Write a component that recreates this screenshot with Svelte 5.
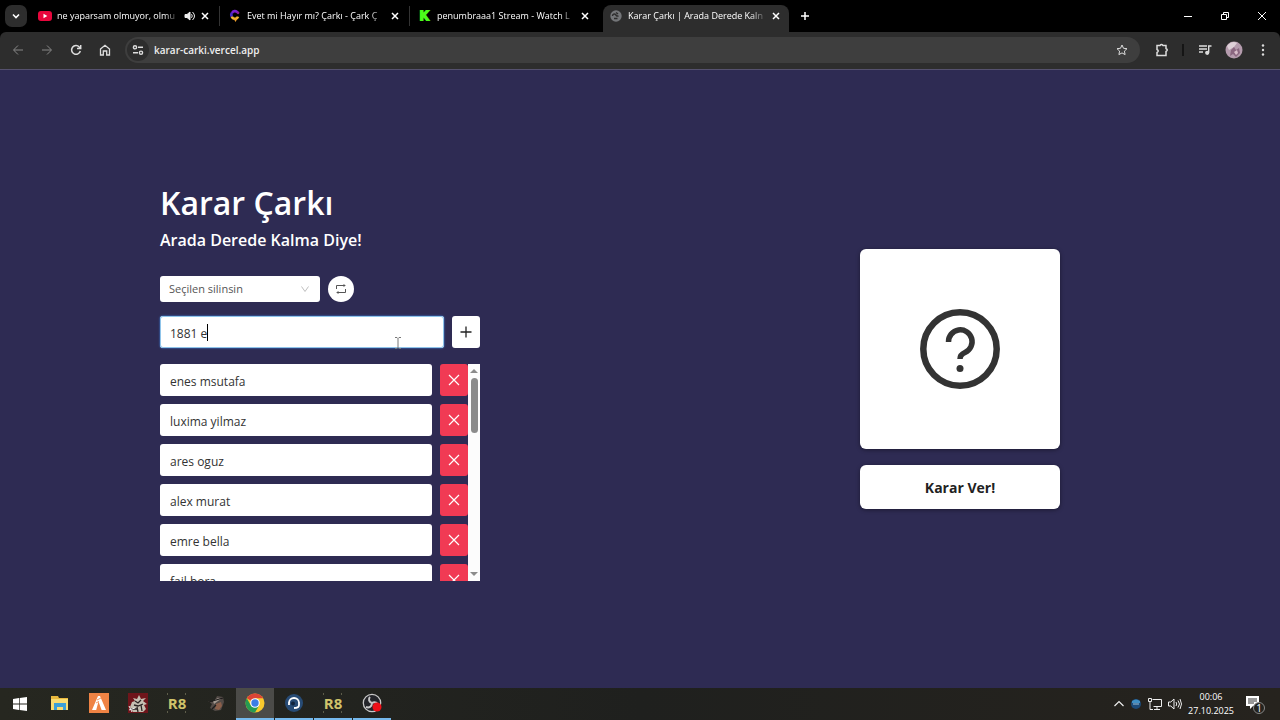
<script lang="ts">
	type Tab = { title: string; icon: string; audio?: boolean; active?: boolean };

	const tabs: Tab[] = [
		{ title: 'ne yaparsam olmuyor, olmu', icon: 'youtube', audio: true },
		{ title: 'Evet mi Hayır mı? Çarkı - Çark Ç', icon: 'wheel' },
		{ title: 'penumbraaa1 Stream - Watch L', icon: 'kick' },
		{ title: 'Karar Çarkı | Arada Derede Kaln', icon: 'globe', active: true }
	];

	const apps = [
		{ name: 'Explorer', icon: 'explorer' },
		{ name: 'FiveM', icon: 'fivem' },
		{ name: 'Samurai', icon: 'samurai' },
		{ name: 'R8', icon: 'r8' },
		{ name: 'Game', icon: 'game' },
		{ name: 'Chrome', icon: 'chrome', running: true, active: true },
		{ name: 'TeamSpeak', icon: 'teamspeak', running: true },
		{ name: 'R8 client', icon: 'r8', running: true },
		{ name: 'OBS', icon: 'obs', running: true }
	];

	let options = $state(['enes msutafa', 'luxima yilmaz', 'ares oguz', 'alex murat', 'emre bella', 'fail bora']);
	let draft = $state('1881 e');
	let mode = $state('remove');
	let url = $state('karar-carki.vercel.app');

	function addOption(event: SubmitEvent) {
		event.preventDefault();
		if (!draft.trim()) return;
		options.push(draft.trim());
		draft = '';
	}

	function removeOption(index: number) {
		options.splice(index, 1);
	}
</script>

{#snippet cross()}
	<svg width="8" height="8" viewBox="0 0 8 8" fill="none" stroke="currentColor" stroke-width="1.5">
		<path d="M1 1l6 6M7 1L1 7" />
	</svg>
{/snippet}

{#snippet favicon(icon: string)}
	<svg class="favicon" width="14" height="14" viewBox="0 0 14 14">
		{#if icon === 'youtube'}
			<rect x="0" y="2" width="14" height="10" rx="3" fill="#e8063c" />
			<path d="M5.5 4.8v4.4L9.3 7z" fill="#fff" />
		{:else if icon === 'wheel'}
			<g fill="none" stroke-width="2.6">
				<path d="M9.5 3.3A3.3 3.3 0 0 0 4 4" stroke="#7a1fd0" />
				<path d="M4 3.8a3.3 3.3 0 0 0 0 4" stroke="#4a25c8" />
				<path d="M3.8 7.6A3.3 3.3 0 0 0 10 7.6" stroke="#f5b832" />
			</g>
			<path d="M5.5 9.5h4L7.5 13z" fill="#f0a02a" />
			<circle cx="10" cy="3.8" r="1.4" fill="#8a1c9a" />
		{:else if icon === 'kick'}
			<text x="2" y="11" font-family="Liberation Sans, sans-serif" font-size="12" font-weight="700" fill="#4cfb1b" stroke="#4cfb1b" stroke-width="1.8">K</text>
		{:else}
			<circle cx="7" cy="7" r="5.7" fill="#747679" />
			<path d="M3.5 7c0-2 2-2.500 3-1.500s1 2 3 1.500M7 3.500l2 1.500M5 9.500h3.500" fill="none" stroke="#2d2d2d" stroke-width="1.5" />
		{/if}
	</svg>
{/snippet}

{#snippet appIcon(icon: string)}
	<svg width="20" height="20" viewBox="0 0 20 20">
		{#if icon === 'explorer'}
			<path d="M1 3h7l1 2h9v12H1z" fill="#e9b93e" />
			<path d="M1 6h17v11H1z" fill="#f9dc72" />
			<path d="M4 10h12v7h-3v-3H7v3H4z" fill="#3ba0d8" />
		{:else if icon === 'fivem'}
			<rect width="20" height="20" fill="#ef8344" />
			<path d="M9 3h2l6 14h-4.4L9.5 8.5 7.2 17H3z" fill="#fff" />
			<path d="M8 7l4-2M7 10l3-1.6" stroke="#ef8344" stroke-width=".8" />
		{:else if icon === 'samurai'}
			<rect width="20" height="20" fill="#6f151b" />
			<path d="M2 14l2-5 3-1-2-3 4 1 2-4 2 4 5-1-3 3 4 3-3 1 2 4-3 3H5z" fill="#c5bfb2" />
			<path d="M7 8l3 2 3-3M6 12l4 1 5-2M9 14l1 5M13 12l1 6M3 16h6" stroke="#2b2424" stroke-width="1.3" fill="none" />
			<path d="M1 13l3 6M1 17l6-2" stroke="#eee" />
		{:else if icon === 'r8'}
			<text x="10" y="16" text-anchor="middle" font-family="Open Sans, sans-serif" font-size="15" font-weight="700" fill="#cfc36a">R8</text>
			<path d="M0 1h1M18 1h1M0 19h1M18 19h1" stroke="#989676" />
		{:else if icon === 'game'}
			<path d="M4 15l2-4-4-3 6 1 3-6 6 1 1 5-3 8-6 1z" fill="#534b47" />
			<path d="M7 8l5-3 3 1-3 2-4 3z" fill="#a39a91" />
			<path d="M10 11l5-2 1 4-3 4-4-1z" fill="#8b5f4a" />
			<path d="M3 9l14-4M6 16l4-4" stroke="#1d1b1b" stroke-width="1.3" />
		{:else if icon === 'chrome'}
			<circle cx="10" cy="10" r="9.5" fill="#f9c92d" />
			<path d="M10 10L1.770 5.250A9.5 9.5 0 0 1 18.230 5.250H10z" fill="#dc4436" />
			<path d="M1.770 5.250A9.5 9.5 0 0 0 10 19.5l4.1-7.1L5.9 12.4z" fill="#269b52" />
			<circle cx="10" cy="10" r="4.8" fill="#fff" />
			<circle cx="10" cy="10" r="3.7" fill="#3c7de5" />
		{:else if icon === 'teamspeak'}
			<circle cx="10" cy="10" r="9" fill="#274b75" />
			<path d="M5 10a5 5 0 0 1 10 0M5 9v3M15 9v3M15 12c0 2-2 3-5 3" fill="none" stroke="#fff" stroke-width="1.8" />
			<circle cx="9" cy="10.5" r="2" fill="#10243d" />
		{:else}
			<circle cx="10" cy="10" r="8.7" fill="#24252a" stroke="#c8c8c8" stroke-width="1.3" />
			<path d="M10 10c-3-1-4-4-2-6M10 10c3-2 6 0 6 3M10 10c0 4-3 5-6 4" fill="none" stroke="#c8c8c8" stroke-width="2" />
			<circle cx="15" cy="14" r="4.5" fill="#ed1018" />
		{/if}
	</svg>
{/snippet}

<div class="desktop">
	<div class="tab-strip">
		<button class="tab-search" aria-label="Search tabs">
			<svg width="10" height="10" viewBox="0 0 10 10" fill="none" stroke="currentColor" stroke-width="1.6">
				<path d="M2 3.5l3 3 3-3" />
			</svg>
		</button>
		{#each tabs as tab}
			<div class="tab" class:active={tab.active}>
				{@render favicon(tab.icon)}
				<span class="tab-title">{tab.title}</span>
				{#if tab.audio}
					<svg width="12" height="12" viewBox="0 0 12 12" fill="none" stroke="#eee">
						<path d="M1 4.5h2L6 2v8L3 7.5H1z" fill="#eee" />
						<path d="M7.5 4.2q1.5 1.8 0 3.6M8.5 2q4 4 0 8" />
					</svg>
				{/if}
				<button class="tab-close" aria-label="Close tab">{@render cross()}</button>
			</div>
		{/each}
		<button class="new-tab" aria-label="New tab">
			<svg width="10" height="10" viewBox="0 0 10 10" stroke="currentColor" stroke-width="1.5">
				<path d="M5 1v8M1 5h8" />
			</svg>
		</button>
		<div class="window-buttons">
			<button aria-label="Minimize">
				<svg width="10" height="10" viewBox="0 0 10 10" stroke="currentColor"><path d="M1 5.5h8" /></svg>
			</button>
			<button aria-label="Restore">
				<svg width="10" height="10" viewBox="0 0 10 10" fill="none" stroke="currentColor">
					<path d="M1.5 3.5h5v5h-5zM3.5 3V1.5h5v5H7" />
				</svg>
			</button>
			<button aria-label="Close">
				<svg width="10" height="10" viewBox="0 0 10 10" stroke="currentColor"><path d="M1 1l8 8M9 1L1 9" /></svg>
			</button>
		</div>
	</div>

	<div class="toolbar-frame">
		<div class="toolbar">
			<button class="nav muted" aria-label="Back">
				<svg width="12" height="12" viewBox="0 0 12 12"><path d="M11 6H2M6 1.5L1.5 6 6 10.5" /></svg>
			</button>
			<button class="nav muted" aria-label="Forward">
				<svg width="12" height="12" viewBox="0 0 12 12"><path d="M1 6h9M6 1.5L10.5 6 6 10.5" /></svg>
			</button>
			<button class="nav" aria-label="Reload">
				<svg width="12" height="12" viewBox="0 0 12 12" stroke-width="1.5"><path d="M10.3 7A4.4 4.4 0 1 1 9.3 3L10.6 4.3M10.7 1v3.6H7" /></svg>
			</button>
			<button class="nav" aria-label="Home">
				<svg width="12" height="12" viewBox="0 0 12 12" stroke-width="1.3"><path d="M1.5 5L6 1.3 10.5 5v6H7.7V7H4.3v4H1.5z" /></svg>
			</button>
			<div class="omnibox">
				<button class="site-info" aria-label="Site information">
					<svg width="12" height="12" viewBox="0 0 12 12" stroke-width="1.4"><circle cx="3" cy="3.3" r="1.6" /><path d="M6 3.3h5M1 8.7h5" /><circle cx="9" cy="8.7" r="1.6" /></svg>
				</button>
				<input class="url" aria-label="Address" bind:value={url} />
				<button class="star" aria-label="Bookmark">
					<svg width="12" height="12" viewBox="0 0 12 12"><path d="M6 1l1.5 3.3 3.5.4-2.6 2.4.7 3.5L6 8.9l-3.1 1.700.7-3.5L1 4.7l3.5-.4z" /></svg>
				</button>
			</div>
			<div class="extensions">
				<button class="nav" aria-label="Extensions">
					<svg width="14" height="14" viewBox="0 0 14 14" stroke-width="1.5"><path d="M2 2.5h3q1.5-2 3 0h3v3q2.5 1.5 0 3v4H2V9.5q2.5-1.5 0-3z" /></svg>
				</button>
				<span class="divider"></span>
				<button class="nav" aria-label="Media controls">
					<svg width="14" height="14" viewBox="0 0 14 14" stroke-width="1.4"><path d="M1 3h8M1 6h8M1 9h4M13.5 3h-2.8v6.5" /><circle cx="9.2" cy="9.8" r="1.4" fill="currentColor" /></svg>
				</button>
				<button class="nav profile" aria-label="Profile">
					<svg width="18" height="18" viewBox="0 0 18 18">
						<circle cx="9" cy="9" r="8.5" fill="#b49bad" />
						<path d="M2 5q5-6 10-3l-3 4-5 3z" fill="#ded0d8" />
						<path d="M6 9l3-3 2 3 3-2 1 5-4 4-3-3-3 2z" fill="#8a6680" />
						<path d="M9 11l3-2 1 3-2 2z" fill="#d8bdca" />
					</svg>
				</button>
				<button class="nav" aria-label="Menu">
					<svg width="12" height="12" viewBox="0 0 12 12"><g fill="#ddd"><circle cx="6" cy="1.5" r="1.2" /><circle cx="6" cy="6" r="1.2" /><circle cx="6" cy="10.5" r="1.2" /></g></svg>
				</button>
			</div>
		</div>
	</div>

	<main>
		<section class="half">
			<div class="editor">
				<h1>Karar Çarkı</h1>
				<h2>Arada Derede Kalma Diye!</h2>

				<div class="mode-row">
					<div class="select-wrap">
						<select aria-label="Mod" bind:value={mode}>
							<option value="remove">Seçilen silinsin</option>
							<option value="keep">Seçilen kalsın</option>
						</select>
						<svg class="chevron" width="10" height="10" viewBox="0 0 10 10" fill="none" stroke="#bfbfbf">
							<path d="M1.5 2.5L5 7.5l3.5-5" />
						</svg>
					</div>
					<button class="repeat" aria-label="Sıfırla">
						<svg width="12" height="12" viewBox="0 0 12 12" fill="none" stroke="#555">
							<path d="M1.5 6V2.5h8M10.5 6v3.5h-8" />
							<path d="M8.5 1l2.3 1.5-2.3 1.5zM3.5 8L1.2 9.5l2.3 1.5z" fill="#555" stroke="none" />
						</svg>
					</button>
				</div>

				<form class="add-row" onsubmit={addOption}>
					<div class="draft-wrap">
						<input class="field focused" aria-label="Seçenek" bind:value={draft} />
						<span class="caret"></span>
						<svg class="pointer" width="8" height="12" viewBox="0 0 8 12" fill="none" stroke="#777">
							<path d="M1 .5h2l1 1 1-1h2M4 1.5v9M1 11.5h2l1-1 1 1h2" />
						</svg>
					</div>
					<button class="add" aria-label="Ekle">
						<svg width="12" height="12" viewBox="0 0 12 12" stroke="#222" stroke-width="1.3"><path d="M6 .5v11M.5 6h11" /></svg>
					</button>
				</form>

				<div class="list">
					<ul>
						{#each options as option, i}
							<li>
								<input class="field" aria-label="Seçenek {i + 1}" bind:value={options[i]} />
								<button class="remove" aria-label="{option} sil" onclick={() => removeOption(i)}>
									<svg width="12" height="12" viewBox="0 0 12 12" stroke="#fff" stroke-width="1.2"><path d="M1 1l10 10M11 1L1 11" /></svg>
								</button>
							</li>
						{/each}
					</ul>
					<div class="scrollbar">
						<span class="arrow up"></span>
						<span class="thumb"></span>
						<span class="arrow down"></span>
					</div>
				</div>
			</div>
		</section>

		<section class="half">
			<div class="decision">
				<div class="card">
					<svg width="80" height="80" viewBox="0 0 80 80" fill="none" stroke="#333" stroke-width="6.5">
						<circle cx="40" cy="40" r="36.7" />
						<path d="M28.5 33a11.8 11.8 0 1 1 16.5 10.5c-3.500 1.500-5 3.500-5 6.500" stroke-width="5.5" />
						<circle cx="40" cy="59.5" r="3.5" fill="#333" stroke="none" />
					</svg>
				</div>
				<button class="decide">Karar Ver!</button>
			</div>
		</section>
	</main>

	<footer class="taskbar">
		<button class="start" aria-label="Start">
			<svg width="14" height="14" viewBox="0 0 14 14" fill="#fff"><path d="M0 2l6-.9v5.5H0zM6.7 1L14 0v6.6H6.7zM0 7.4h6v5.5L0 12zM6.7 7.4H14V14l-7.3-1z" /></svg>
		</button>
		{#each apps as app}
			<button class="app" class:running={app.running} class:current={app.active} aria-label={app.name}>
				{@render appIcon(app.icon)}
			</button>
		{/each}
		<div class="tray">
			<svg width="10" height="10" viewBox="0 0 10 10" fill="none" stroke="#eee" stroke-width="1.2"><path d="M.5 7L5 2.5 9.5 7" /></svg>
			<svg width="12" height="12" viewBox="0 0 12 12"><circle cx="6" cy="6" r="5" fill="#1c4a78" /><path d="M2 3q4-3 8 0v2H2z" fill="#3f8fc4" /><path d="M3 6h6" stroke="#9fc5dc" /></svg>
			<svg width="14" height="14" viewBox="0 0 14 14" fill="none" stroke="#eee"><path d="M4.5 2.5h9v7h-8M9 9.5v3M6 12.5h6M.5 1.5h3v3h-3zM2 4.5v8h3" /></svg>
			<svg width="14" height="14" viewBox="0 0 14 14" fill="none" stroke="#eee"><path d="M.5 5h2.3L6 2v10L2.8 9H.5zM8 5q1.5 2 0 4M10 3.5q3 3.5 0 7M12 2q3 5 0 10" /></svg>
			<div class="clock">
				<span>00:06</span>
				<span>27.10.2025</span>
			</div>
			<button class="notice" aria-label="Notifications">
				<svg width="20" height="20" viewBox="0 0 20 20">
					<path d="M1 2h13v10H8l-3 3v-3H1z" fill="#fff" />
					<path d="M3 5h9M3 7h9M3 9h6" stroke="#333" />
					<circle cx="14" cy="14" r="5.5" fill="#24231f" stroke="#888" />
					<text x="14" y="18" text-anchor="middle" font-family="Open Sans, sans-serif" font-size="10" fill="#fff">1</text>
				</svg>
			</button>
		</div>
	</footer>
</div>

<style>
	:global(body) {
		margin: 0;
	}

	.desktop {
		display: flex;
		flex-direction: column;
		min-height: 100vh;
		background: #2e2b53;
		color: #fff;
		font-family: 'Segoe UI', 'Open Sans', 'Noto Sans', sans-serif;
	}

	.desktop * {
		box-sizing: border-box;
	}

	svg {
		display: block;
		flex-shrink: 0;
	}

	button {
		display: flex;
		align-items: center;
		justify-content: center;
		padding: 0;
		border: 0;
		background: none;
		color: inherit;
		font-family: inherit;
	}

	input,
	select {
		min-width: 0;
		border: 0;
		outline: 0;
		font-family: inherit;
	}

	.tab-strip {
		display: flex;
		align-items: center;
		height: 32px;
		padding-left: 5px;
		background: #000;
	}

	.tab-search {
		width: 22px;
		height: 22px;
		margin-right: 3px;
		border-radius: 7px;
		background: #2d2d2d;
	}

	.tab {
		display: flex;
		align-items: center;
		gap: 5px;
		flex: 0 1 190px;
		height: 20px;
		min-width: 0;
		padding: 0 10px 0 8px;
		border-right: 1px solid #333;
	}

	.tab:has(+ :global(.active)) {
		border-color: transparent;
	}

	.tab.active {
		align-self: flex-end;
		flex-basis: 186px;
		height: 27px;
		margin: 0 3px;
		padding: 0 9px 5px 6px;
		border: 0;
		border-radius: 8px 8px 0 0;
		background: #2d2d2d;
	}

	.tab-title {
		flex: 1;
		min-width: 0;
		overflow: hidden;
		font-size: 9px;
		font-weight: 500;
		line-height: 16px;
		white-space: nowrap;
		mask-image: linear-gradient(to right, #000 88%, transparent);
	}

	.new-tab {
		width: 26px;
		height: 22px;
	}

	.window-buttons {
		display: flex;
		margin-left: auto;
	}

	.window-buttons button {
		width: 37px;
		height: 32px;
	}

	.toolbar-frame {
		background: #000;
	}

	.toolbar {
		display: flex;
		align-items: center;
		height: 38px;
		padding: 0 5px 1px;
		border-bottom: 1px solid #55516e;
		border-radius: 6px 6px 0 0;
		background: #2d2d2d;
		color: #ddd;
	}

	.toolbar svg {
		fill: none;
		stroke: currentColor;
	}

	.nav {
		width: 25px;
		height: 26px;
		margin-right: 4px;
	}

	.toolbar .muted {
		color: #888;
	}

	.omnibox {
		display: flex;
		align-items: center;
		flex: 1;
		height: 26px;
		margin-left: 4px;
		padding: 0 12px 0 2px;
		border-radius: 13px;
		background: #3e3e3e;
	}

	.site-info {
		width: 22px;
		height: 22px;
		border-radius: 50%;
		background: #2d2d2d;
	}

	.url {
		flex: 1;
		padding: 0 5px;
		background: none;
		color: #eee;
		font-size: 10px;
		font-weight: 600;
	}

	.extensions {
		display: flex;
		align-items: center;
		margin-left: 9px;
	}

	.extensions .nav:last-child {
		margin-right: 0;
	}

	.extensions .nav:last-child svg,
	.extensions .profile svg {
		stroke: none;
	}

	.divider {
		width: 2px;
		height: 12px;
		margin: 0 8px 0 4px;
		background: #151515;
	}

	main {
		display: flex;
		flex: 1;
	}

	.half {
		display: flex;
		align-items: center;
		justify-content: center;
		flex: 1;
	}

	.editor {
		width: 320px;
	}

	h1 {
		margin: 0;
		font-size: 32px;
		font-weight: 600;
		line-height: 50px;
	}

	h2 {
		margin: 0 0 24px;
		font-size: 16px;
		font-weight: 600;
		line-height: 24px;
	}

	.mode-row {
		display: flex;
		gap: 8px;
		margin-bottom: 14px;
	}

	.select-wrap {
		position: relative;
		width: 160px;
	}

	select {
		width: 100%;
		height: 26px;
		padding: 0 24px 0 9px;
		border-radius: 3px;
		appearance: none;
		background: #fff;
		color: #555;
		font-size: 11px;
	}

	.chevron {
		position: absolute;
		top: 8px;
		right: 10px;
		pointer-events: none;
	}

	.repeat {
		width: 26px;
		height: 26px;
		border-radius: 50%;
		background: #fff;
	}

	.add-row {
		display: flex;
		gap: 8px;
		margin-bottom: 16px;
	}

	.draft-wrap {
		display: flex;
		position: relative;
		flex: 1;
	}

	.field {
		flex: 1;
		height: 32px;
		padding: 3px 10px 0;
		border-radius: 3px;
		background: #fff;
		color: #333;
		font-size: 12px;
	}

	.focused {
		box-shadow: inset 0 0 0 1px #8fc4ea, 0 0 2px #4096ff;
	}

	.caret {
		position: absolute;
		top: 8px;
		left: 47px;
		width: 1px;
		height: 17px;
		background: #000;
	}

	.pointer {
		position: absolute;
		top: 21px;
		right: 42px;
	}

	.add,
	.remove {
		width: 28px;
		height: 32px;
		border-radius: 3px;
		background: #fff;
	}

	.remove {
		background: #f13a54;
	}

	.list {
		display: flex;
		height: 217px;
		overflow: hidden;
	}

	ul {
		display: flex;
		flex-direction: column;
		gap: 8px;
		flex: 1;
		margin: 0;
		padding: 0;
		list-style: none;
	}

	li {
		display: flex;
		gap: 8px;
	}

	.scrollbar {
		display: flex;
		flex-direction: column;
		align-items: center;
		width: 12px;
		padding: 5px 0;
		background: #fcfcfc;
	}

	.thumb {
		width: 7px;
		height: 55px;
		margin-top: 5px;
		border-radius: 4px;
		background: #8b8b8b;
	}

	.arrow {
		border: 4px solid transparent;
	}

	.up {
		border-top: 0;
		border-bottom-color: #8b8b8b;
	}

	.down {
		margin-top: auto;
		border-bottom: 0;
		border-top-color: #8b8b8b;
	}

	.decision {
		display: flex;
		flex-direction: column;
		gap: 16px;
		width: 200px;
	}

	.card,
	.decide {
		border-radius: 6px;
		background: #fff;
		box-shadow: 0 1px 4px rgba(0, 0, 0, 0.4);
	}

	.card {
		display: flex;
		align-items: center;
		justify-content: center;
		aspect-ratio: 1;
	}

	.decide {
		height: 44px;
		color: #222;
		font-size: 14px;
		font-weight: 700;
	}

	.taskbar {
		display: flex;
		align-items: center;
		gap: 1px;
		height: 32px;
		background: linear-gradient(to right, #262720, #1f201e 50%, #26231e);
	}

	.start {
		width: 40px;
		height: 32px;
	}

	.app {
		width: 38px;
		height: 32px;
		border-bottom: 2px solid transparent;
	}

	.running {
		border-color: #76b9ed;
	}

	.current {
		background: #4b4b48;
	}

	.tray {
		display: flex;
		align-items: center;
		gap: 6px;
		margin-left: auto;
		padding-right: 15px;
	}

	.clock {
		display: flex;
		flex-direction: column;
		align-items: center;
		font-size: 9px;
		line-height: 14px;
	}

	.notice {
		margin-left: 5px;
	}
</style>
